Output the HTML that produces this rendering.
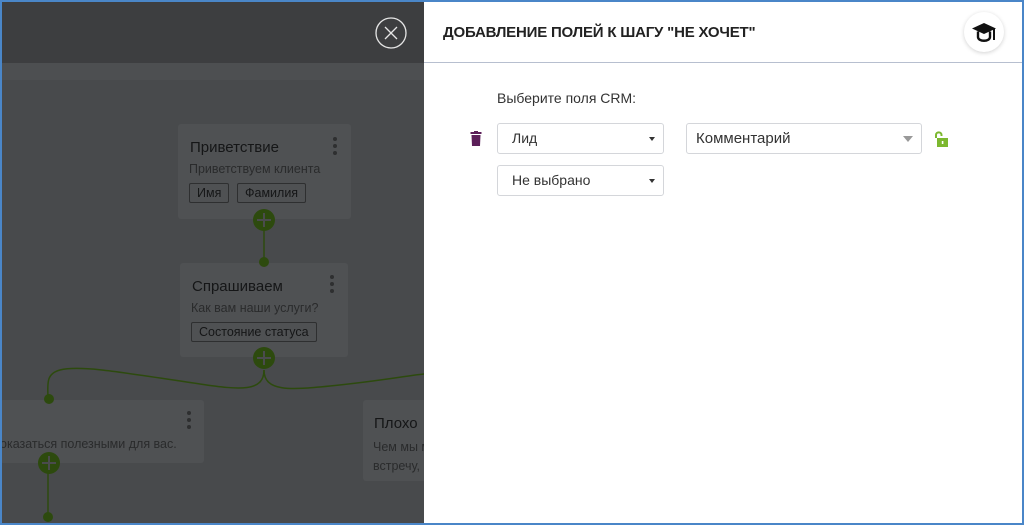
<!DOCTYPE html>
<html><head><meta charset="utf-8"><style>
*{box-sizing:border-box;margin:0;padding:0}
body{width:1024px;height:525px;overflow:hidden;font-family:"Liberation Sans",Arial,sans-serif;position:relative;background:#fff}
.frame{position:absolute;inset:0;border:2px solid #4a86c8;z-index:50;pointer-events:none}
.left{position:absolute;left:0;top:0;width:424px;height:525px;background:#484a4c;overflow:hidden}
.topbar{position:absolute;left:0;top:0;width:424px;height:63px;background:#3d3e40}
.band{position:absolute;left:0;top:63px;width:424px;height:17px;background:#4d4f51}
.card{position:absolute;background:#4f5153;border-radius:3px}
.card .t{position:absolute;font-size:15px;color:#151617}
.card .s{position:absolute;font-size:12.5px;color:#2a2b2c}
.tag{position:absolute;border:1px solid #2e2f30;border-radius:2px;font-size:12.5px;color:#151617;padding:2px 7px;height:20px;line-height:15px}
.dots{position:absolute;width:4px}
.dots i{display:block;width:4px;height:4px;border-radius:50%;background:#2e2f30;margin-bottom:3px}
.plus{position:absolute;width:22px;height:22px;border-radius:50%;background:#2d4a0e}
.plus:before{content:"";position:absolute;left:4px;top:10px;width:14px;height:2px;background:#4a4b4d}
.plus:after{content:"";position:absolute;left:10px;top:4px;width:2px;height:14px;background:#4a4b4d}
.dot{position:absolute;width:10px;height:10px;border-radius:50%;background:#2d4a0e}
.right{position:absolute;left:424px;top:0;width:600px;height:525px;background:#fff}
.hdr{position:absolute;left:0;top:0;width:600px;height:63px;border-bottom:1px solid #b7bfcf}
.hdr h1{position:absolute;left:19px;top:24px;font-size:15px;font-weight:bold;color:#222;letter-spacing:-0.2px}
.cap{position:absolute;left:540px;top:12px;width:40px;height:40px;border-radius:50%;background:#fff;box-shadow:0 1px 4px rgba(0,0,0,.18)}
.lbl{position:absolute;left:73px;top:90px;font-size:14px;color:#333}
.sel{position:absolute;border:1px solid #d4d6da;border-radius:3px;height:31px;font-size:14px;color:#333;padding-left:14px;line-height:29px}
.sel:after{content:"";position:absolute;right:8px;top:13px;border-left:3px solid transparent;border-right:3px solid transparent;border-top:4px solid #333}
.sel.g:after{border-left-width:5px;border-right-width:5px;border-top:6px solid #999;top:12px}
</style></head><body>
<div class="left">
<div class="topbar"></div>
<div class="band"></div>
<svg width="424" height="525" style="position:absolute;left:0;top:0">
<line x1="264" y1="222" x2="264" y2="262" stroke="#2d4a0e" stroke-width="1.5"/>
<path d="M264 370 C264 392 240 390 200 384 C120 372 80 365 60 370 C45 374 48 385 48 400" stroke="#2d4a0e" stroke-width="1.5" fill="none"/>
<path d="M264 370 C264 392 290 390 330 386 C380 381 405 376 424 374" stroke="#2d4a0e" stroke-width="1.5" fill="none"/>
<line x1="48" y1="465" x2="48" y2="518" stroke="#2d4a0e" stroke-width="1.5"/>
<circle cx="391" cy="33" r="15" fill="none" stroke="#e6e6e6" stroke-width="1.3"/>
<path d="M385 27 L397 39 M397 27 L385 39" stroke="#e6e6e6" stroke-width="1.3"/>
</svg>
<div class="card" style="left:178px;top:124px;width:173px;height:95px">
<div class="t" style="left:12px;top:15px">Приветствие</div>
<div class="s" style="left:11px;top:38px">Приветствуем клиента</div>
<div class="tag" style="left:11px;top:59px">Имя</div>
<div class="tag" style="left:59px;top:59px">Фамилия</div>
<div class="dots" style="left:155px;top:13px"><i></i><i></i><i></i></div>
</div>
<div class="card" style="left:180px;top:263px;width:168px;height:94px">
<div class="t" style="left:12px;top:15px">Спрашиваем</div>
<div class="s" style="left:11px;top:38px">Как вам наши услуги?</div>
<div class="tag" style="left:11px;top:59px">Состояние статуса</div>
<div class="dots" style="left:150px;top:12px"><i></i><i></i><i></i></div>
</div>
<div class="card" style="left:0;top:400px;width:204px;height:63px">
<div class="s" style="left:0;top:37px">оказаться полезными для вас.</div>
<div class="dots" style="left:187px;top:11px"><i></i><i></i><i></i></div>
</div>
<div class="card" style="left:363px;top:400px;width:70px;height:81px">
<div class="t" style="left:11px;top:15px">Плохо</div>
<div class="s" style="left:10px;top:38px;line-height:19px;white-space:nowrap">Чем мы м<br>встречу, </div>
</div>
<div class="plus" style="left:253px;top:209px"></div>
<div class="dot" style="left:259px;top:257px"></div>
<div class="plus" style="left:253px;top:347px"></div>
<div class="dot" style="left:44px;top:394px"></div>
<div class="plus" style="left:38px;top:452px"></div>
<div class="dot" style="left:43px;top:512px"></div>
</div>
<div class="right">
<div class="hdr"><h1>ДОБАВЛЕНИЕ ПОЛЕЙ К ШАГУ "НЕ ХОЧЕТ"</h1>
<div class="cap"><svg width="40" height="40" viewBox="0 0 40 40">
<path d="M20 11 L32 16.5 L20 22 L8 16.5 Z" fill="#111"/>
<path d="M14 19.5 V25 C14 30 26 30 26 25 V19.5" fill="none" stroke="#111" stroke-width="2.4"/>
<line x1="30" y1="17" x2="30" y2="28" stroke="#111" stroke-width="2"/>
</svg></div></div>
<div class="lbl">Выберите поля CRM:</div>
<svg style="position:absolute;left:46px;top:131px" width="12" height="15" viewBox="0 0 12 15"><rect x="0.5" y="1" width="11" height="2" fill="#5c1f59"/><rect x="4" y="0" width="4" height="2" fill="#5c1f59"/><path d="M1.5 4 H10.5 L10 15 H2 Z" fill="#5c1f59"/></svg>
<div class="sel" style="left:73px;top:123px;width:167px">Лид</div>
<div class="sel g" style="left:262px;top:123px;width:236px;font-size:15px;padding-left:9px">Комментарий</div>
<svg style="position:absolute;left:509px;top:131px" width="18" height="17" viewBox="0 0 18 17"><path d="M3 7 V4 C3 0.5 8.5 0.5 8.5 4 V5" fill="none" stroke="#7cb82f" stroke-width="2"/><rect x="4" y="7" width="11" height="9" fill="#7cb82f"/><rect x="8.8" y="10" width="1.6" height="3" fill="#fff"/></svg>
<div class="sel" style="left:73px;top:165px;width:167px">Не выбрано</div>
</div>
<div class="frame"></div>
</body></html>
